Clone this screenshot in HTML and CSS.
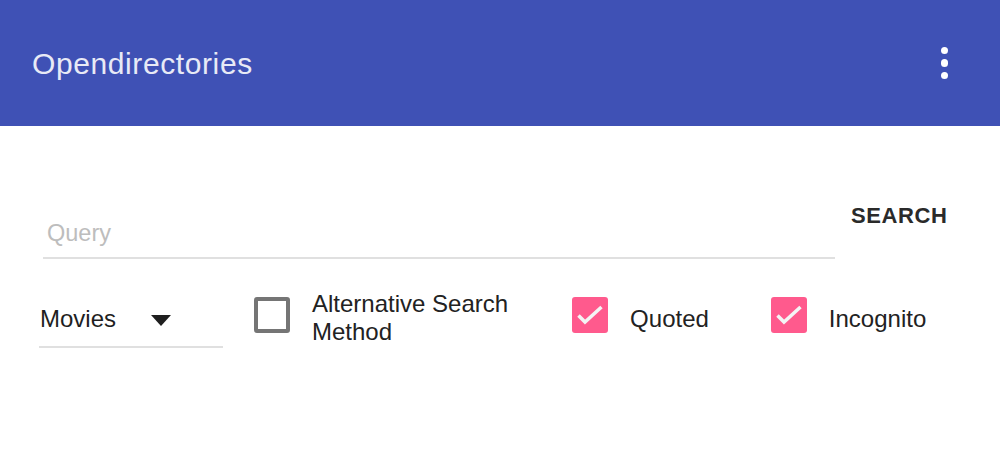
FILE: index.html
```html
<!DOCTYPE html>
<html>
<head>
<meta charset="utf-8">
<link rel="stylesheet" href="styles.css">
</head>
<body>
<header class="appbar">
  <h1 class="title">Opendirectories</h1>
  <button class="menu" aria-label="More">
    <span class="dot"></span><span class="dot"></span><span class="dot"></span>
  </button>
</header>
<main class="content">
  <div class="search-row">
    <div class="query">
      <span class="placeholder">Query</span>
    </div>
    <button class="search-btn">SEARCH</button>
  </div>
  <div class="options-row">
    <div class="select">
      <span class="select-text">Movies</span>
      <svg class="caret" width="20" height="11" viewBox="0 0 20 11"><path d="M0 0H20L10 11Z" fill="#1f1f1f"/></svg>
    </div>
    <label class="check check-alt">
      <span class="box"></span>
      <span class="label">Alternative Search<br>Method</span>
    </label>
    <label class="check check-quoted">
      <span class="box checked"><svg width="36" height="36" viewBox="0 0 36 36"><path d="M6.5 18.5L13 25L29.5 10" fill="none" stroke="#f4f4f4" stroke-width="3.5"/></svg></span>
      <span class="label">Quoted</span>
    </label>
    <label class="check check-incog">
      <span class="box checked"><svg width="36" height="36" viewBox="0 0 36 36"><path d="M6.5 18.5L13 25L29.5 10" fill="none" stroke="#f4f4f4" stroke-width="3.5"/></svg></span>
      <span class="label">Incognito</span>
    </label>
  </div>
</main>
</body>
</html>
```

FILE: styles.css
```css
* { box-sizing: border-box; }
html, body { margin: 0; padding: 0; background: #fff; }
body { font-family: "Liberation Sans", Arial, sans-serif; width: 1000px; height: 463px; overflow: hidden; }

.appbar {
  height: 126px;
  background: #3f51b5;
  display: flex;
  align-items: center;
  justify-content: space-between;
  padding: 0 52px 0 32px;
}
.title {
  margin: 0;
  font-weight: normal;
  font-size: 30px;
  letter-spacing: 0.6px;
  color: #e8eaf6;
  margin-top: 2px;
}
.menu {
  background: none;
  border: 0;
  padding: 0;
  display: flex;
  flex-direction: column;
  gap: 5px;
  margin-top: 0;
}
.dot { width: 7.5px; height: 7.5px; border-radius: 50%; background: #fff; display: block; }

.content { padding: 0 0 0 39px; }

.search-row {
  display: flex;
  align-items: flex-start;
  padding-top: 77px;
}
.query {
  margin-left: 4px;
  width: 792px;
  height: 56px;
  border-bottom: 2px solid #e0e0e0;
  padding: 17px 0 0 4px;
}
.placeholder { font-size: 23.5px; color: #bdbdbd; }
.search-btn {
  margin-left: 16px;
  background: none;
  border: 0;
  padding: 0;
  font-family: "Liberation Sans", Arial, sans-serif;
  font-size: 22px;
  font-weight: bold;
  color: #2a2a2a;
  letter-spacing: 0.6px;
  margin-top: 0;
}

.options-row {
  display: flex;
  align-items: center;
  margin-top: 36px;
}
.select {
  width: 184px;
  height: 53px;
  border-bottom: 2px solid #e0e0e0;
  display: flex;
  align-items: center;
  padding-left: 1px;
  padding-bottom: 4px;
}
.select-text { font-size: 24px; color: #1f1f1f; }
.caret { margin-left: 35px; margin-top: 4px; }

.check { display: flex; align-items: center; }
.box {
  width: 36px; height: 36px;
  border-radius: 3px;
  border: 4px solid #757575;
  display: block;
  flex: none;
}
.box.checked { border: 0; background: #ff5a8d; }
.box svg { display: block; }
.label { font-size: 24px; color: #222; line-height: 28px; margin-left: 22px; }
.check-alt { margin-left: 31px; margin-top: -13px; }
.check-alt .label { margin-top: 6px; }
.check-quoted { margin-left: 64px; margin-top: -13px; }
.check-quoted .label, .check-incog .label { margin-top: 8px; }
.check-incog { margin-left: 62px; margin-top: -13px; }
```
